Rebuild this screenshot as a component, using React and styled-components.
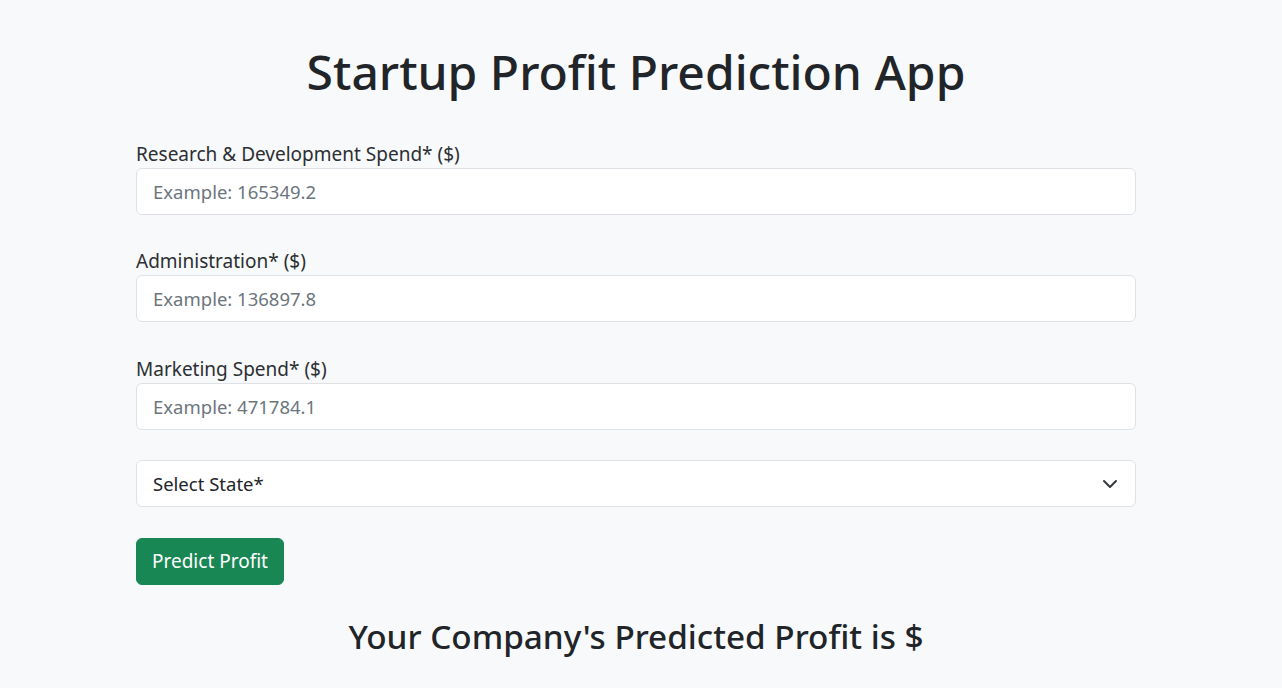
import React from 'react'
import styled, { createGlobalStyle } from 'styled-components'

const GlobalStyle = createGlobalStyle`
    html, body {
        margin: 0;
        padding: 0;
        background-color: #f8f9fa;
    }

    body {
        font-family: 'Noto Sans', 'Open Sans', sans-serif;
        color: #212529;
    }

    * {
        box-sizing: border-box;
    }
`

const fields = [
    { id: 'rd', label: 'Research & Development Spend* ($)', example: '165349.2' },
    { id: 'admin', label: 'Administration* ($)', example: '136897.8' },
    { id: 'marketing', label: 'Marketing Spend* ($)', example: '471784.1' }
]

const App = () => {
    return (
        <>
            <GlobalStyle />
            <Page>
                <Container>
                    <Title>Startup Profit Prediction App</Title>
                    <Form onSubmit={(e) => e.preventDefault()}>
                        {fields.map((field) => (
                            <Group key={field.id}>
                                <Label htmlFor={field.id}>{field.label}</Label>
                                <Input
                                    id={field.id}
                                    type='text'
                                    placeholder={`Example: ${field.example}`}
                                />
                            </Group>
                        ))}
                        <SelectWrap>
                            <Select defaultValue=''>
                                <option value=''>Select State*</option>
                                <option value='New York'>New York</option>
                                <option value='California'>California</option>
                                <option value='Florida'>Florida</option>
                            </Select>
                            <Chevron viewBox='0 0 16 16' aria-hidden='true'>
                                <path
                                    d='m2 5 6 6 6-6'
                                    fill='none'
                                    stroke='#343a40'
                                    strokeWidth='2'
                                    strokeLinecap='round'
                                    strokeLinejoin='round'
                                />
                            </Chevron>
                        </SelectWrap>
                        <Button type='submit'>Predict Profit</Button>
                    </Form>
                    <Result>Your Company's Predicted Profit is $</Result>
                </Container>
            </Page>
        </>
    )
}

const Page = styled.div`
    min-height: 688px;
    padding: 43px 10px 0 0;
`

const Container = styled.div`
    width: 1000px;
    margin: 0 auto;
`

const Title = styled.h1`
    margin: 0 0 40px;
    font-size: 48px;
    font-weight: 500;
    line-height: 1.2;
    text-align: center;
`

const Form = styled.form`
    display: flex;
    flex-direction: column;
`

const Group = styled.div`
    display: flex;
    flex-direction: column;
    margin-bottom: 33px;

    &:nth-child(2) {
        margin-bottom: 34px;
    }

    &:nth-child(3) {
        margin-bottom: 30px;
    }
`

const Label = styled.label`
    font-size: 19px;
    line-height: 27px;
    color: #2b2f33;
`

const Input = styled.input`
    width: 100%;
    height: 47px;
    padding: 0 16px;
    font-family: inherit;
    font-size: 18.5px;
    color: #212529;
    background-color: #fff;
    border: 1px solid #dee2e6;
    border-radius: 6px;
    outline: none;

    &::placeholder {
        color: #6c757d;
    }
`

const SelectWrap = styled.div`
    position: relative;
    margin-bottom: 31px;
`

const Select = styled.select`
    width: 100%;
    height: 47px;
    padding: 0 48px 0 16px;
    font-family: inherit;
    font-size: 18.5px;
    color: #212529;
    background-color: #fff;
    border: 1px solid #dee2e6;
    border-radius: 6px;
    appearance: none;
    outline: none;
`

const Chevron = styled.svg`
    position: absolute;
    top: 16px;
    right: 18px;
    width: 16px;
    height: 16px;
    pointer-events: none;
`

const Button = styled.button`
    align-self: flex-start;
    height: 47px;
    padding: 0 15px;
    font-family: inherit;
    font-size: 19px;
    color: #fff;
    background-color: #198754;
    border: 1px solid #198754;
    border-radius: 6px;
    cursor: pointer;
`

const Result = styled.h2`
    margin: 32px 0 0;
    font-size: 33.3px;
    font-weight: 500;
    line-height: 1.2;
    text-align: center;
`

export default App
